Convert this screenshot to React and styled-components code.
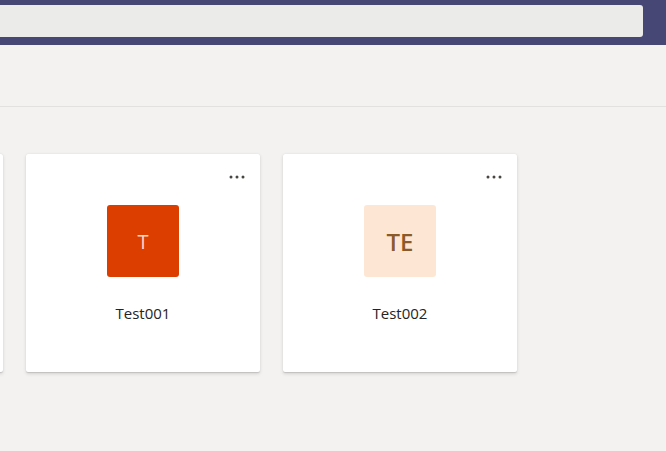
import React from "react";
import styled, { createGlobalStyle } from "styled-components";

const Global = createGlobalStyle`
  html, body { margin: 0; padding: 0; }
  body {
    background: #f3f2f1;
    font-family: "Segoe UI", "Open Sans", "Noto Sans", sans-serif;
    overflow: hidden;
  }
`;

const Page = styled.div`
  width: 666px;
  height: 451px;
  display: flex;
  flex-direction: column;
  background: #f3f2f1;
  overflow: hidden;
`;

const TopBar = styled.header`
  height: 45px;
  background: #464775;
  display: flex;
  align-items: flex-start;
  padding-top: 5px;
  box-sizing: border-box;
  flex-shrink: 0;
`;

const Search = styled.div`
  margin-left: -20px;
  width: 663px;
  height: 32px;
  background: #ebebea;
  border-radius: 3px;
`;

const Header = styled.div`
  height: 61px;
  border-bottom: 1px solid #e3e1df;
  flex-shrink: 0;
`;

const Grid = styled.div`
  display: flex;
  gap: 23px;
  padding-top: 47px;
  margin-left: -231px;
`;

const Card = styled.div`
  position: relative;
  flex: 0 0 234px;
  height: 218px;
  background: #ffffff;
  border-radius: 2px;
  box-shadow: 0 1.6px 3.6px rgba(0, 0, 0, 0.13), 0 0.3px 0.9px rgba(0, 0, 0, 0.11);
  display: flex;
  flex-direction: column;
  align-items: center;
  padding-top: 51px;
  box-sizing: border-box;
`;

const More = styled.button`
  position: absolute;
  top: 16px;
  right: 12px;
  width: 22px;
  height: 14px;
  border: 0;
  padding: 0;
  background: transparent;
  display: flex;
  align-items: center;
  justify-content: center;
`;

const Avatar = styled.div`
  width: 72px;
  height: 72px;
  border-radius: 3px;
  background: ${(p) => p.$bg};
  color: ${(p) => p.$fg};
  display: flex;
  align-items: center;
  justify-content: center;
  font-size: ${(p) => (p.$bold ? "24px" : "20px")};
  font-weight: ${(p) => (p.$bold ? 600 : 400)};
`;

const Name = styled.div`
  margin-top: 26px;
  font-size: 15px;
  line-height: 20px;
  color: #252423;
`;

const Dots = () => (
  <svg width="16" height="4" viewBox="0 0 16 4">
    <circle cx="2" cy="2" r="1.5" fill="#484644" />
    <circle cx="8" cy="2" r="1.5" fill="#484644" />
    <circle cx="14" cy="2" r="1.5" fill="#484644" />
  </svg>
);

const teams = [
  { name: "Test000", initials: "T", bg: "#dc3e00", fg: "#f6d6c8", bold: false },
  { name: "Test001", initials: "T", bg: "#dc3e00", fg: "#f6d6c8", bold: false },
  { name: "Test002", initials: "TE", bg: "#fde7d4", fg: "#8a5a2b", bold: true },
];

export default function App() {
  return (
    <>
      <Global />
      <Page>
        <TopBar>
          <Search />
        </TopBar>
        <Header />
        <Grid>
          {teams.map((t) => (
            <Card key={t.name}>
              <More aria-label="More options">
                <Dots />
              </More>
              <Avatar $bg={t.bg} $fg={t.fg} $bold={t.bold}>
                {t.initials}
              </Avatar>
              <Name>{t.name}</Name>
            </Card>
          ))}
        </Grid>
      </Page>
    </>
  );
}
